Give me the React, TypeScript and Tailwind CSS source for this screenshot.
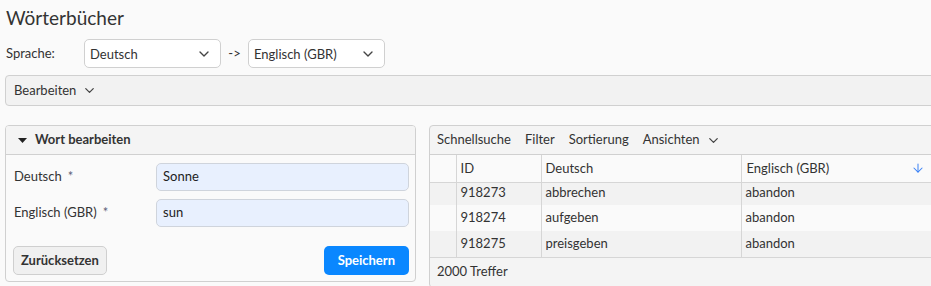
import { ChevronDown, ArrowDown } from 'lucide-react';

const rows = [
  { id: '918273', de: 'abbrechen', en: 'abandon' },
  { id: '918274', de: 'aufgeben', en: 'abandon' },
  { id: '918275', de: 'preisgeben', en: 'abandon' },
];

function Select({ value, width }: { value: string; width: string }) {
  return (
    <div
      className={`flex h-[29px] items-center justify-between rounded-[5px] border border-[#d0d0d0] bg-white pl-[5px] pr-[8px] text-[13px] text-[#333] ${width}`}
    >
      <span className="pt-[3px]">{value}</span>
      <ChevronDown size={16} strokeWidth={2} className="text-[#444]" />
    </div>
  );
}

function Field({ label, value }: { label: string; value: string }) {
  return (
    <div className="flex h-[28px] items-center">
      <div className="w-[142px] text-[13px] text-[#333]">
        {label}
        <span className="ml-[6px] text-[#5b6478]">*</span>
      </div>
      <div className="flex h-[28px] flex-1 items-center rounded-[5px] border border-[#cfd4dc] bg-[#e8f0fe] pl-[6px] text-[13px] text-[#222]">
        {value}
      </div>
    </div>
  );
}

export default function App() {
  return (
    <div
      className="h-[286px] w-[931px] overflow-hidden bg-[#fafafa] text-[#333]"
      style={{ fontFamily: 'Lato, "Noto Sans", sans-serif' }}
    >
      <div className="w-[960px]">
        <h1 className="pl-[6px] pt-[6px] text-[19px] leading-[24px] text-[#333]">Wörterbücher</h1>

        <div className="mt-[9px] flex items-center pl-[6px]">
          <span className="w-[78px] text-[13px]">Sprache:</span>
          <Select value="Deutsch" width="w-[137px]" />
          <span className="w-[27px] text-center text-[13px]">-&gt;</span>
          <Select value="Englisch (GBR)" width="w-[137px]" />
        </div>

        <div className="ml-[5px] mt-[7px] flex h-[31px] items-center gap-[6px] rounded-[4px] border border-[#d0d0d0] bg-[#f2f2f2] pl-[8px] text-[13px]">
          <span>Bearbeiten</span>
          <ChevronDown size={15} strokeWidth={2} className="text-[#444]" />
        </div>

        <div className="ml-[5px] mt-[19px] flex items-start gap-[13px]">
          <div className="w-[411px] overflow-hidden rounded-[4px] border border-[#d0d0d0] bg-[#fafafa]">
            <div className="flex h-[29px] items-center gap-[8px] border-b border-[#d0d0d0] bg-[#f4f4f4] pl-[12px] text-[13px] font-bold">
              <svg width="9" height="5" viewBox="0 0 9 5" className="fill-[#222]">
                <path d="M0 0 H9 L4.5 5 Z" />
              </svg>
              <span>Wort bearbeiten</span>
            </div>
            <div className="flex flex-col gap-[8px] pl-[8px] pr-[6px] pt-[8px]">
              <Field label="Deutsch" value="Sonne" />
              <Field label="Englisch (GBR)" value="sun" />
            </div>
            <div className="flex items-center justify-between pb-[6px] pl-[7px] pr-[6px] pt-[19px]">
              <button className="h-[29px] rounded-[5px] border border-[#cfcfcf] bg-[#f0f0f0] px-[7px] text-[13px] font-bold text-[#333]">
                Zurücksetzen
              </button>
              <button className="h-[29px] rounded-[5px] bg-[#0a87ff] px-[14px] text-[13px] font-bold text-white">
                Speichern
              </button>
            </div>
          </div>

          <div className="flex-1 overflow-hidden rounded-[4px] border border-[#d0d0d0] bg-[#f4f4f4]">
            <div className="flex h-[29px] items-center gap-[14px] border-b border-[#d0d0d0] pl-[7px] text-[13px]">
              <span>Schnellsuche</span>
              <span>Filter</span>
              <span>Sortierung</span>
              <span className="flex items-center gap-[6px]">
                Ansichten
                <ChevronDown size={15} strokeWidth={2} className="text-[#444]" />
              </span>
            </div>
            <table className="w-full border-collapse text-[13px]">
              <thead>
                <tr className="h-[27px] bg-[#fafafa]">
                  <th className="w-[26px] border-b border-r border-[#d6d6d6]" />
                  <th className="w-[85px] border-b border-r border-[#d6d6d6] pl-[4px] text-left font-normal">ID</th>
                  <th className="w-[200px] border-b border-r border-[#d6d6d6] pl-[4px] text-left font-normal">Deutsch</th>
                  <th className="w-[190px] border-b border-r border-[#d6d6d6] pl-[5px] pr-[6px] text-left font-normal">
                    <div className="flex items-center justify-between">
                      <span>Englisch (GBR)</span>
                      <ArrowDown size={14} strokeWidth={1.75} className="text-[#3b82f6]" />
                    </div>
                  </th>
                  <th className="border-b border-[#d6d6d6]" />
                </tr>
              </thead>
              <tbody>
                {rows.map((r, i) => (
                  <tr
                    key={r.id}
                    className={`${i === 0 ? 'h-[23px] align-top' : 'h-[26px]'} ${i % 2 === 0 ? 'bg-[#f2f2f2]' : 'bg-[#fafafa]'} ${i === rows.length - 1 ? 'border-b border-[#d6d6d6]' : ''}`}
                  >
                    <td className="border-r border-[#d6d6d6]" />
                    <td className="border-r border-[#d6d6d6] pl-[4px]">{r.id}</td>
                    <td className="border-r border-[#d6d6d6] pl-[4px]">{r.de}</td>
                    <td className="border-r border-[#d6d6d6] pl-[4px]">{r.en}</td>
                    <td />
                  </tr>
                ))}
              </tbody>
            </table>
            <div className="flex h-[29px] items-center pl-[7px] text-[13px]">2000 Treffer</div>
          </div>
        </div>
      </div>
    </div>
  );
}
